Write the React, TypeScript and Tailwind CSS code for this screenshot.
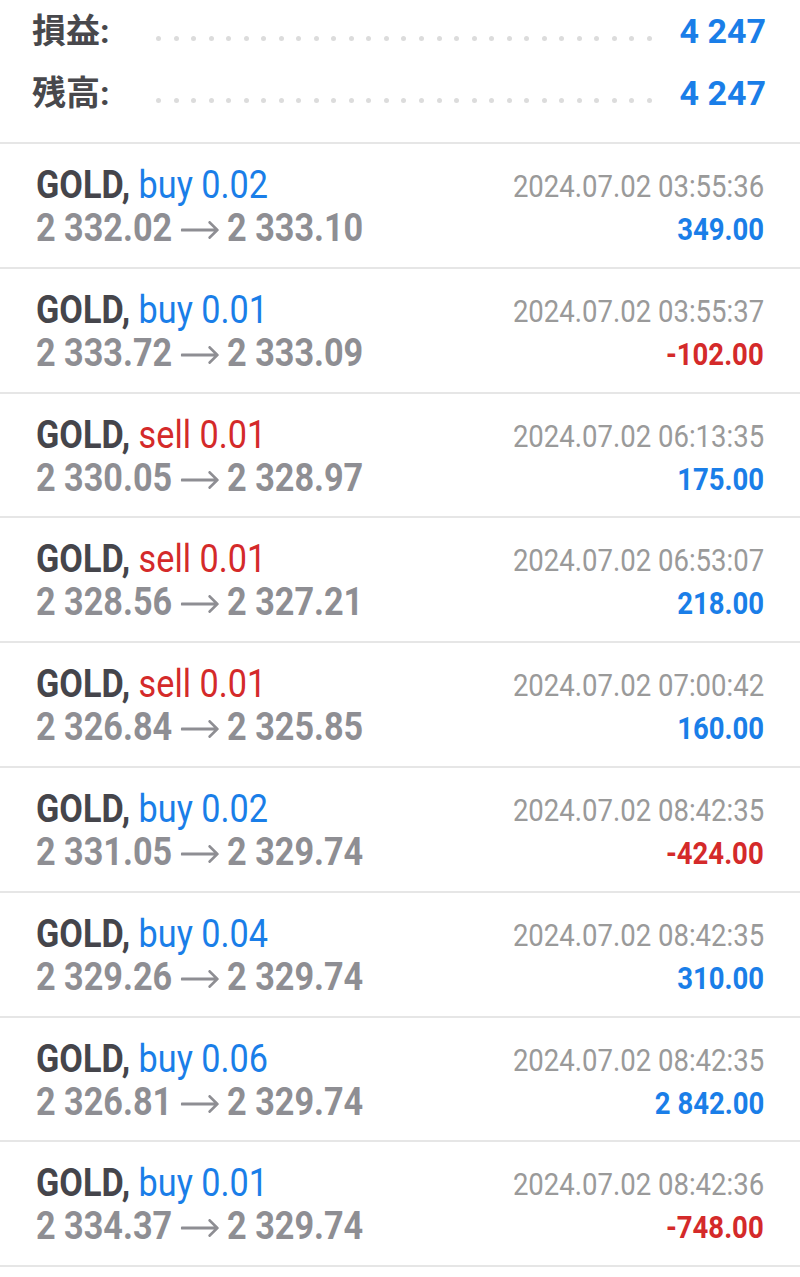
import clsx from 'clsx'

type Deal = {
  side: 'buy' | 'sell'
  volume: string
  open: string
  close: string
  time: string
  profit: string
}

const deals: Deal[] = [
  { side: 'buy', volume: '0.02', open: '2 332.02', close: '2 333.10', time: '2024.07.02 03:55:36', profit: '349.00' },
  { side: 'buy', volume: '0.01', open: '2 333.72', close: '2 333.09', time: '2024.07.02 03:55:37', profit: '-102.00' },
  { side: 'sell', volume: '0.01', open: '2 330.05', close: '2 328.97', time: '2024.07.02 06:13:35', profit: '175.00' },
  { side: 'sell', volume: '0.01', open: '2 328.56', close: '2 327.21', time: '2024.07.02 06:53:07', profit: '218.00' },
  { side: 'sell', volume: '0.01', open: '2 326.84', close: '2 325.85', time: '2024.07.02 07:00:42', profit: '160.00' },
  { side: 'buy', volume: '0.02', open: '2 331.05', close: '2 329.74', time: '2024.07.02 08:42:35', profit: '-424.00' },
  { side: 'buy', volume: '0.04', open: '2 329.26', close: '2 329.74', time: '2024.07.02 08:42:35', profit: '310.00' },
  { side: 'buy', volume: '0.06', open: '2 326.81', close: '2 329.74', time: '2024.07.02 08:42:35', profit: '2 842.00' },
  { side: 'buy', volume: '0.01', open: '2 334.37', close: '2 329.74', time: '2024.07.02 08:42:36', profit: '-748.00' },
]

// the history list uses a condensed face; Roboto squeezed horizontally stands in for it
function Narrow({ children, className }: { children: React.ReactNode; className?: string }) {
  return <span className={clsx('inline-block whitespace-nowrap', className)}>{children}</span>
}

function Arrow() {
  return (
    <svg width="43" height="18" viewBox="0 0 43 18" className="ml-[10px] mr-[8px] inline-block align-[2px]">
      <path d="M1 9 H40 M32 1.5 L40.5 9 L32 16.5" fill="none" stroke="#8e8e93" strokeWidth="3" strokeLinecap="round" strokeLinejoin="round" />
    </svg>
  )
}

function SummaryRow({ label, value }: { label: string; value: string }) {
  return (
    <div className="flex h-[62px] items-center">
      <div className="w-[124px] font-['Roboto','Noto_Sans_CJK_JP',sans-serif] text-[34px] font-bold text-[#48484c]">
        {label}:
      </div>
      {/* Dotted leader */}
      <div className="flex w-[496px] translate-y-[7px] justify-between">
        {Array.from({ length: 29 }).map((_, i) => (
          <span key={i} className="h-[5px] w-[5px] rounded-full bg-[#dcdcdc]" />
        ))}
      </div>
      <div className="flex-1 text-right text-[34px] font-bold text-[#1a7ee8]">{value}</div>
    </div>
  )
}

function DealRow({ deal }: { deal: Deal }) {
  const loss = deal.profit.startsWith('-')

  return (
    <div className="flex h-[124.8px] justify-between border-t-2 border-[#e6e6e6] pl-9 pr-9">
      <div className="flex flex-col pt-[19px]">
        <Narrow className="origin-left scale-x-[0.9] text-[38px] leading-[44px]">
          <span className="font-bold text-[#45454b]">GOLD, </span>
          <span className={deal.side === 'buy' ? 'text-[#1a7ee8]' : 'text-[#d42a2a]'}>
            {deal.side} {deal.volume}
          </span>
        </Narrow>
        <Narrow className="origin-left scale-x-[0.9] text-[38px] leading-[43px] font-bold text-[#8e8e93]">
          {deal.open}
          <Arrow />
          {deal.close}
        </Narrow>
      </div>

      <div className="flex flex-col items-end pt-[21px]">
        <Narrow className="origin-right scale-x-[0.86] text-[32px] leading-[43px] text-[#9a9a9a]">{deal.time}</Narrow>
        <Narrow
          className={clsx(
            'origin-right scale-x-[0.86] text-[32px] leading-[43px] font-bold',
            loss ? 'text-[#d42a2a]' : 'text-[#1a7ee8]',
          )}
        >
          {deal.profit}
        </Narrow>
      </div>
    </div>
  )
}

export default function App() {
  return (
    <div className="min-h-[1277px] w-[800px] bg-white font-['Roboto',sans-serif]">
      <div className="pt-0 pb-[18px] pl-8 pr-[34px]">
        <SummaryRow label="損益" value="4 247" />
        <SummaryRow label="残高" value="4 247" />
      </div>

      {deals.map((deal, i) => (
        <DealRow key={i} deal={deal} />
      ))}
      <div className="border-t-2 border-[#e6e6e6]" />
    </div>
  )
}
